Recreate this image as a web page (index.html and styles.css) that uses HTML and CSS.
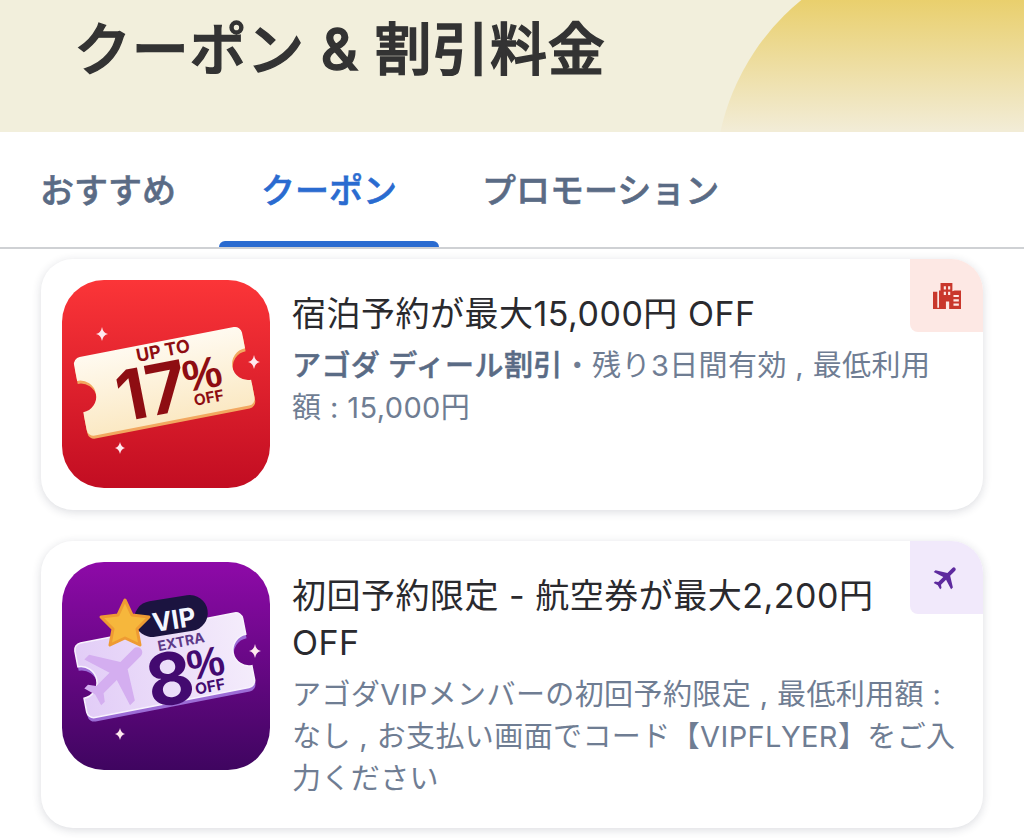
FILE: index.html
```html
<!DOCTYPE html>
<html lang="ja">
<head>
<meta charset="utf-8">
<title>クーポン &amp; 割引料金</title>
<link rel="stylesheet" href="styles.css">
</head>
<body>
<header class="hero">
  <div class="hero-arc"></div>
  <h1 class="hero-title">クーポン &amp; 割引料金</h1>
</header>
<nav class="tabs">
  <a class="tab">おすすめ</a>
  <a class="tab tab-active">クーポン</a>
  <a class="tab">プロモーション</a>
</nav>
<main class="list">
  <article class="card">
    <svg class="thumb" viewBox="0 0 208 208">
      <defs>
        <linearGradient id="redbg" x1="0" y1="0" x2="0" y2="1"><stop offset="0" stop-color="#fb3538"/><stop offset="1" stop-color="#c20d22"/></linearGradient>
        <linearGradient id="cream" x1="0" y1="0" x2="0" y2="1"><stop offset="0" stop-color="#fffaf0"/><stop offset="1" stop-color="#fbe9c4"/></linearGradient>
      </defs>
      <rect width="208" height="208" rx="42" fill="url(#redbg)"/>
      <g transform="rotate(-11 104 102)">
        <path d="M24 63H181a7 7 0 0 1 7 7V84a16 16 0 0 0 0 32V134a7 7 0 0 1-7 7H24a7 7 0 0 1-7-7V116a16 16 0 0 0 0-32V70a7 7 0 0 1 7-7Z" fill="#f2a860" transform="translate(0 3)"/>
        <path d="M24 61H181a7 7 0 0 1 7 7V84a16 16 0 0 0 0 32V134a7 7 0 0 1-7 7H24a7 7 0 0 1-7-7V116a16 16 0 0 0 0-32V68a7 7 0 0 1 7-7Z" fill="url(#cream)"/>
        <text class="t-small" x="107" y="77" font-size="18" fill="#8e0d12" text-anchor="middle">UP TO</text>
        <text class="t-big" x="88" y="133" font-size="70" fill="#8e0d12" text-anchor="middle">17</text>
        <text class="t-pct" x="141" y="116" font-size="44" fill="#8e0d12" text-anchor="middle">%</text>
        <text class="t-small" x="143" y="131" font-size="15.5" fill="#8e0d12" text-anchor="middle">OFF</text>
      </g>
      <path class="spark" d="M40 47q1 6 6 7q-5 1-6 7q-1-6-6-7q5-1 6-7Z"/>
      <path class="spark" d="M192 75q1 6 6 7q-5 1-6 7q-1-6-6-7q5-1 6-7Z"/>
      <path class="spark" d="M58 162q1 5 5 6q-4 1-5 6q-1-5-5-6q4-1 5-6Z"/>
    </svg>
    <div class="body">
      <h2 class="title">宿泊予約が最大15,000円 OFF</h2>
      <p class="desc"><b class="desc-strong">アゴダ ディール割引</b>・残り3日間有効 , 最低利用<br>額 : 15,000円</p>
    </div>
    <div class="badge badge-red">
      <svg class="badge-icon" viewBox="0 0 26 26"><path fill="#c9372c" fill-rule="evenodd" d="M7 1H18V8.5L20 8H26V25H15V18H12V25H0V9H4V24H5.6V8H7ZM10 4V7H12V4ZM14 4V7H16V4ZM10 9V12H12V9ZM14 9V12H16V9ZM19 12V14H24V12ZM19 16V18H24V16ZM19 20V22H24V20Z"/></svg>
    </div>
  </article>
  <article class="card">
    <svg class="thumb" viewBox="0 0 208 208">
      <defs>
        <linearGradient id="purplebg" x1="0" y1="0" x2="0" y2="1"><stop offset="0" stop-color="#8e0aa8"/><stop offset="1" stop-color="#3f0560"/></linearGradient>
        <linearGradient id="lav" x1="0" y1="0" x2="1" y2="0"><stop offset="0" stop-color="#e2cdf7"/><stop offset="1" stop-color="#f4ecfb"/></linearGradient>
      </defs>
      <rect width="208" height="208" rx="42" fill="url(#purplebg)"/>
      <g transform="rotate(-11 104 102)">
        <path d="M24 65H181a7 7 0 0 1 7 7V88a16 16 0 0 0 0 32V134a7 7 0 0 1-7 7H24a7 7 0 0 1-7-7V120a16 16 0 0 0 0-32V72a7 7 0 0 1 7-7Z" fill="#9c6cd6" transform="translate(0 4)"/>
        <path d="M24 65H181a7 7 0 0 1 7 7V88a16 16 0 0 0 0 32V134a7 7 0 0 1-7 7H24a7 7 0 0 1-7-7V120a16 16 0 0 0 0-32V72a7 7 0 0 1 7-7Z" fill="url(#lav)" stroke="#f8f3fd" stroke-width="1.5"/>
        <text class="t-small" x="123" y="88" font-size="14" fill="#5d3a88" text-anchor="middle">EXTRA</text>
        <text class="t-big" x="105" y="143" font-size="72" fill="#430a70" text-anchor="middle">8</text>
        <text class="t-pct" x="143" y="123" font-size="42" fill="#430a70" text-anchor="middle">%</text>
        <text class="t-small" x="143" y="138" font-size="15.5" fill="#430a70" text-anchor="middle">OFF</text>
      </g>
      <g transform="translate(56 112) rotate(45) scale(3.4) translate(-12 -12)">
        <path fill="#d4aef0" d="M21 16v-2l-8-5V3.5c0-.83-.67-1.5-1.5-1.5S10 2.67 10 3.5V9l-8 5v2l8-2.5V19l-2 1.5V22l3.5-1 3.5 1v-1.5L13 19v-5.5l8 2.5z"/>
      </g>
      <rect x="72" y="36" width="74" height="36" rx="18" fill="#1b1440" transform="rotate(-9 109 54)"/>
      <text class="t-vip" x="112" y="67" font-size="26" fill="#f4f7ff" text-anchor="middle" transform="rotate(-9 112 58)">VIP</text>
      <path d="M63 38L70 53L87 55L75 67L78 83L63 76L48 83L51 67L39 55L56 53Z" fill="#f6b73c" stroke="#ee9b33" stroke-width="3" stroke-linejoin="round"/>
      <path class="spark" d="M193 82q1 6 6 7q-5 1-6 7q-1-6-6-7q5-1 6-7Z"/>
      <path class="spark" d="M58 166q1 5 5 6q-4 1-5 6q-1-5-5-6q4-1 5-6Z"/>
    </svg>
    <div class="body">
      <h2 class="title">初回予約限定 - 航空券が最大2,200円<br>OFF</h2>
      <p class="desc">アゴダVIPメンバーの初回予約限定 , 最低利用額 :<br>なし , お支払い画面でコード【VIPFLYER】をご入<br>力ください</p>
    </div>
    <div class="badge badge-purple">
      <svg class="badge-icon plane-icon" viewBox="0 0 24 24"><path class="plane" transform="rotate(45 12 12)" d="M21 16v-2l-8-5V3.5c0-.83-.67-1.5-1.5-1.5S10 2.67 10 3.5V9l-8 5v2l8-2.5V19l-2 1.5V22l3.5-1 3.5 1v-1.5L13 19v-5.5l8 2.5z"/></svg>
    </div>
  </article>
</main>
</body>
</html>
```
FILE: styles.css
```css
* { box-sizing: border-box; }
html, body { margin: 0; height: 838px; overflow: hidden; }
body {
  background: #fff;
  font-family: Inter, "Noto Sans CJK JP", "Noto Sans", "Liberation Sans", sans-serif;
  color: #2a2a2e;
}
.hero {
  position: relative;
  height: 132px;
  background: #f2efdc;
  overflow: hidden;
  padding: 11px 0 0 74px;
}
.hero-arc {
  position: absolute;
  top: -53px;
  right: -161px;
  width: 470px;
  height: 470px;
  border-radius: 50%;
  background: linear-gradient(180deg, #e9cf6c 11%, #f2ecd6 39%);
}
.hero-title {
  position: relative;
  margin: 0;
  font-size: 57px;
  line-height: 78px;
  font-weight: 500;
  letter-spacing: 0.7px;
  -webkit-text-stroke: 1.4px #333333;
  color: #333333;
  white-space: nowrap;
}
.tabs {
  display: flex;
  gap: 1px;
  height: 117px;
  border-bottom: 2px solid #cfd1d4;
  margin-left: -2px;
}
.tab {
  position: relative;
  display: flex;
  align-items: center;
  justify-content: center;
  height: 115px;
  padding: 0 42px 2px;
  font-size: 34px;
  font-weight: 500;
  -webkit-text-stroke: 0.6px currentColor;
  color: #5a6b85;
  white-space: nowrap;
}
.tab-active { color: #2a6bd0; }
.tab-active::after {
  content: "";
  position: absolute;
  left: 0;
  right: 0;
  bottom: 0;
  height: 6px;
  border-radius: 6px 6px 0 0;
  background: #2a6bd0;
}
.list {
  display: flex;
  flex-direction: column;
  gap: 31px;
  padding: 10px 41px 0;
}
.card {
  position: relative;
  display: flex;
  gap: 22px;
  padding: 21px;
  min-height: 251px;
  background: #fff;
  border-radius: 32px;
  box-shadow: 0 2px 10px rgba(30, 40, 60, 0.16);
}
.thumb {
  flex: none;
  display: block;
  width: 208px;
  height: 208px;
}
.spark { fill: #ffe9ef; }
.t-small, .t-big, .t-vip { font-family: Inter, "Liberation Sans", sans-serif; }
.t-pct { font-family: "Liberation Sans", sans-serif; font-weight: 700; }
.t-small { font-weight: 700; }
.t-big { font-weight: 700; }
.t-vip { font-weight: 700; }
.body { flex: 1; min-width: 0; padding: 10px 0 7px; }
.title {
  margin: 0 0 8px;
  font-size: 34px;
  line-height: 47px;
  font-weight: 400;
  letter-spacing: 0.5px;
  color: #2a2a2e;
  white-space: nowrap;
}
.desc {
  margin: 0;
  font-size: 29px;
  line-height: 42px;
  letter-spacing: 0.4px;
  color: #6f7d93;
  white-space: nowrap;
}
.desc-strong { font-weight: 500; -webkit-text-stroke: 0.5px currentColor; color: #5a6b85; }
.badge {
  position: absolute;
  top: 0;
  right: 0;
  display: flex;
  align-items: center;
  justify-content: center;
  width: 73px;
  height: 73px;
  border-radius: 0 32px 0 8px;
}
.badge-red { background: #fde8e4; }
.badge-purple { background: #f1e9fb; }
.badge-icon { display: block; width: 28px; height: 28px; }
.plane-icon { width: 31px; height: 31px; }
.plane { fill: #5e2a9e; }
```
